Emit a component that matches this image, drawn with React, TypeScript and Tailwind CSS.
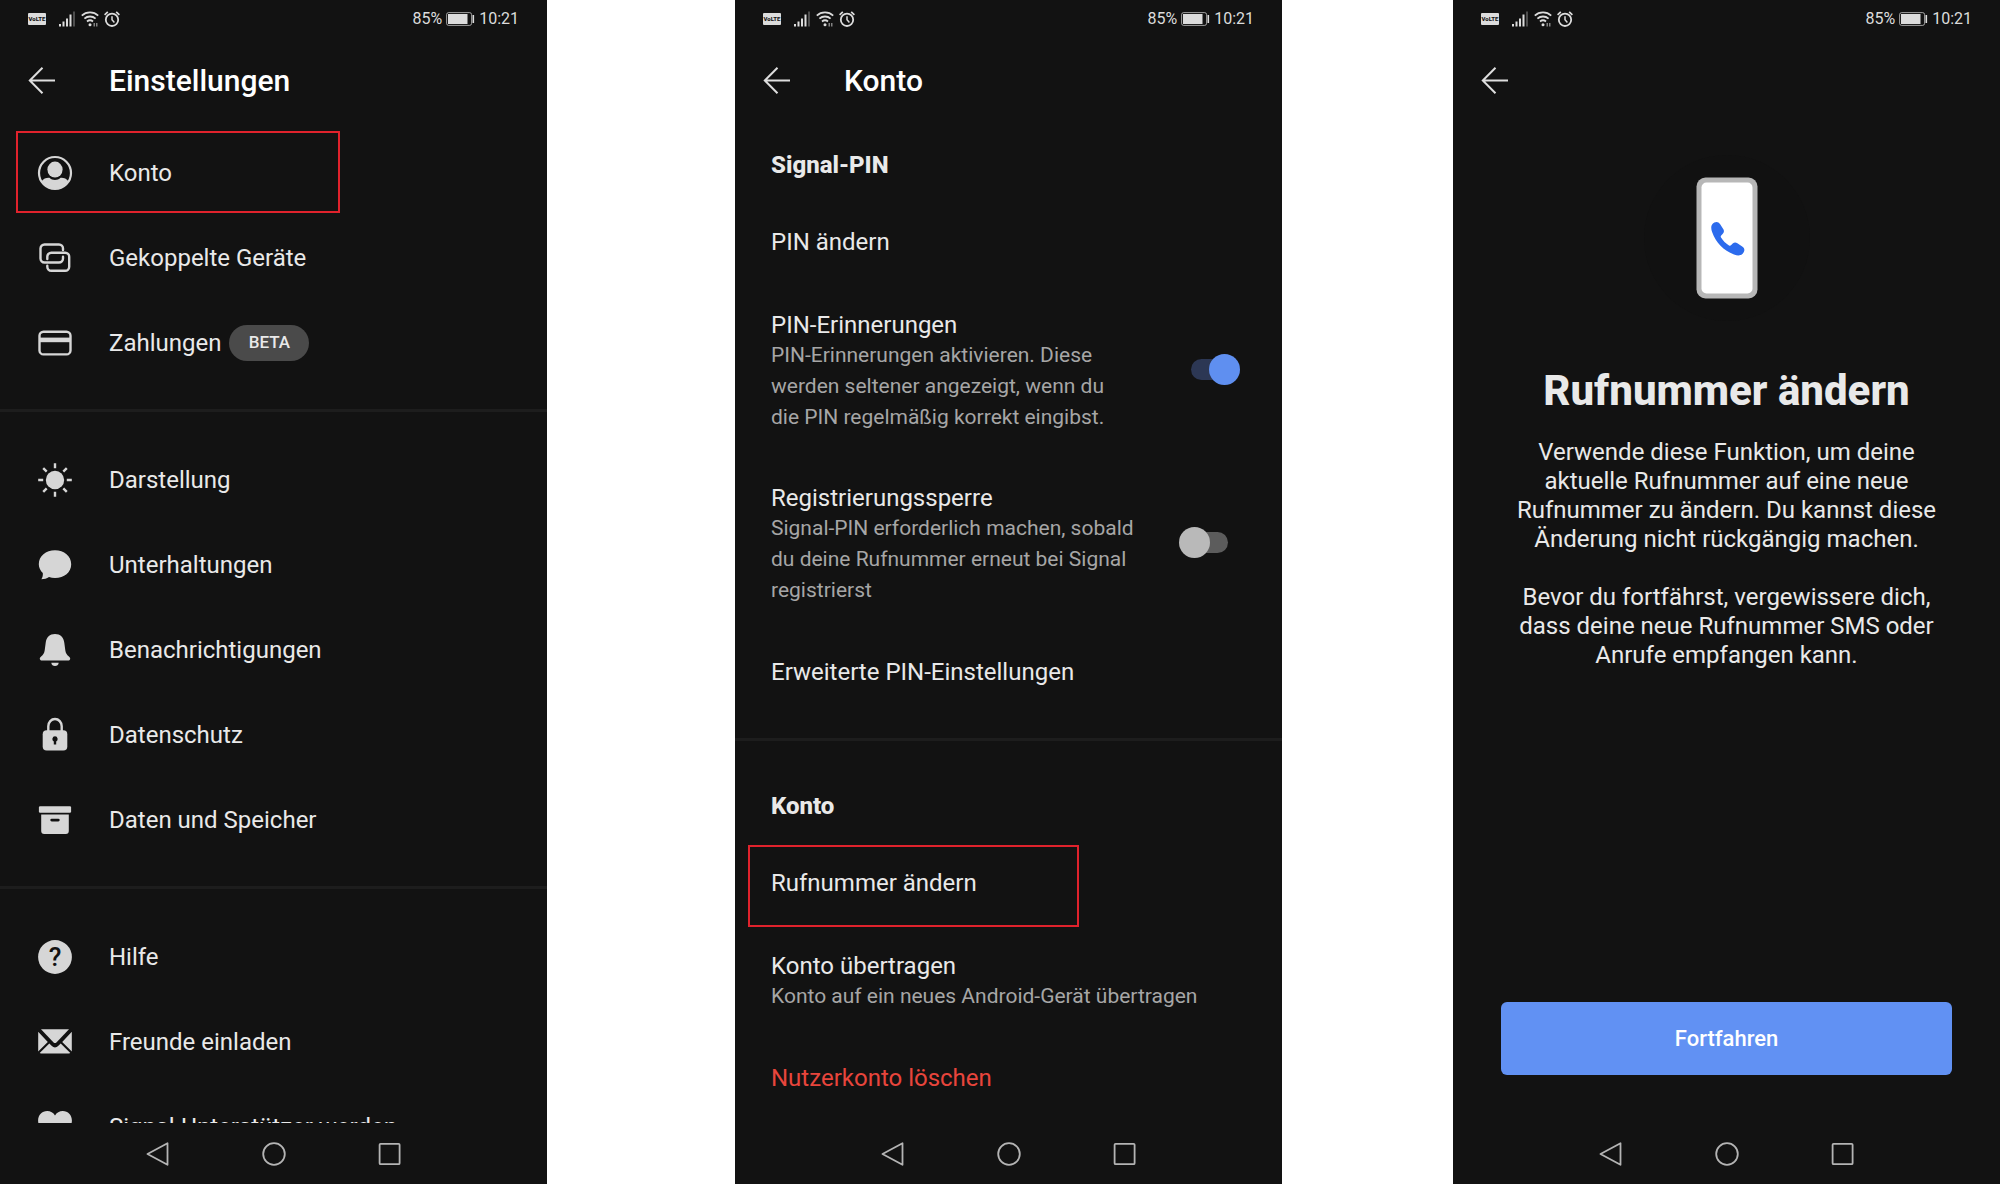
import { useState } from "react";
import type { ReactNode } from "react";

function Icon({ children }: { children: ReactNode }) {
  return (
    <svg viewBox="0 0 36 36" className="h-9 w-9 shrink-0 text-[#d6d6d6]" fill="currentColor" aria-hidden="true">
      {children}
    </svg>
  );
}

const icons = {
  account: (
    <Icon>
      <circle cx="18" cy="18" r="16" fill="none" stroke="currentColor" strokeWidth="2.2" />
      <ellipse cx="18" cy="14.6" rx="7.6" ry="8" />
      <path d="M4.5 26.5C6.500 23.600 9.300 22.600 12.400 22.800c3 2.900 8.200 2.900 11.200 0 3.100-.2 5.900.8 7.900 3.700A16 16 0 0 1 4.500 26.500z" />
    </Icon>
  ),
  devices: (
    <Icon>
      <g fill="none" stroke="currentColor" strokeWidth="2.400" strokeLinecap="round">
        <path d="M26 10V8.500a4 4 0 0 0-4-4H7.500a4 4 0 0 0-4 4v10a4 4 0 0 0 4 4H22a4 4 0 0 0 4-4v-1.700" />
        <path d="M10.300 19v-2.200a4 4 0 0 1 4-4h13.900a4 4 0 0 1 4 4v10a4 4 0 0 1-4 4H14.300a4 4 0 0 1-4-4v-1" />
      </g>
    </Icon>
  ),
  card: (
    <Icon>
      <rect x="2.500" y="6.700" width="31" height="22.700" rx="4" fill="none" stroke="currentColor" strokeWidth="2.400" />
      <rect x="2.500" y="12.600" width="31" height="4.600" />
    </Icon>
  ),
  sun: (
    <Icon>
      <circle cx="18" cy="18" r="9.200" />
      <path
        d="M18 1.200v5M18 29.800v5M1.200 18h5M29.800 18h5M6.200 6.200l3.500 3.500M26.300 26.300l3.500 3.500M6.200 29.800l3.500-3.500M26.300 9.700l3.500-3.500"
        fill="none"
        stroke="currentColor"
        strokeWidth="2.400"
      />
    </Icon>
  ),
  chat: (
    <Icon>
      <path d="M18 3.200c9.200 0 16.200 5.800 16.200 14S27.200 31 18 31c-2.200 0-4.200-.3-6-.9-2.200 1.400-4.700 2.200-7.600 2.200 1.200-2 1.700-4 1.400-6.200C3.400 23.700 1.800 20.700 1.800 17.200c0-8.200 7-14 16.200-14z" />
    </Icon>
  ),
  bell: (
    <Icon>
      <path d="M18 2c5.300 0 8.600 3.400 9.300 8.700l1 7.600c.4 3 1.500 4.500 3.600 6.200 1.200 1 1.500 1.800 1.200 2.800-.3.900-1 1.200-2.100 1.200H5c-1.100 0-1.800-.3-2.100-1.200-.3-1 0-1.800 1.200-2.800 2.100-1.700 3.200-3.200 3.600-6.200l1-7.600C9.400 5.400 12.700 2 18 2z" />
      <path d="M14.300 30.700h7.400c-.3 2.100-1.600 3.300-3.700 3.300s-3.400-1.200-3.700-3.300z" />
    </Icon>
  ),
  lock: (
    <Icon>
      <path d="M11.300 15V9.200a6.700 7.200 0 0 1 13.400 0V15" fill="none" stroke="currentColor" strokeWidth="2.400" />
      <rect x="5.700" y="13.300" width="24.600" height="20.200" rx="4" />
      <path d="M18 19.300a2.700 2.700 0 0 1 1.200 5.100v3h-2.400v-3a2.700 2.700 0 0 1 1.200-5.100z" fill="#121212" />
    </Icon>
  ),
  archive: (
    <Icon>
      <rect x="1.900" y="4.200" width="32.200" height="6.500" rx="1.200" />
      <path
        fillRule="evenodd"
        d="M4.200 12.600h27.600v16.400a3 3 0 0 1-3 3H7.200a3 3 0 0 1-3-3zM14.700 16.700a1.400 1.400 0 0 0 0 2.800h6.600a1.400 1.400 0 0 0 0-2.800z"
      />
    </Icon>
  ),
  help: (
    <Icon>
      <circle cx="18" cy="18" r="16.900" />
      <text x="18" y="27" textAnchor="middle" fontSize="26" fontWeight="500" fill="#121212">
        ?
      </text>
    </Icon>
  ),
  mail: (
    <Icon>
      <path d="M4 5.200h28L19.400 18.400a2 2 0 0 1-2.800 0z" />
      <path d="M1.200 7.700l9.600 10.200-9.600 9.600zM34.800 7.700l-9.600 10.200 9.600 9.600z" />
      <path d="M12.300 19.400l2.600 2.700a4.300 4.300 0 0 0 6.200 0l2.600-2.700L33.300 29a3 3 0 0 1-1.300.5H4a3 3 0 0 1-1.300-.5z" />
    </Icon>
  ),
  heart: (
    <Icon>
      <path d="M18 6.600C19.600 3.500 22.500 2 25.800 2c5.200 0 9.100 4 9.100 9.500 0 9.200-9.900 16.200-16.900 21.700C11 27.700 1.100 20.700 1.100 11.500 1.100 6 5 2 10.200 2c3.300 0 6.200 1.500 7.800 4.600z" />
    </Icon>
  ),
};

function StatusBar() {
  return (
    <div className="flex h-[38px] shrink-0 items-center pr-[28px] pl-[28px] text-[#dcdcdc]">
      <span className="flex h-3 w-[18px] items-center justify-center rounded-[1px] bg-[#dcdcdc] text-[6px] leading-none font-extrabold text-[#121212]">
        VoLTE
      </span>
      <svg viewBox="0 0 17 16" className="ml-[13px] h-4 w-[17px]" fill="currentColor" aria-hidden="true">
        <path d="M0 13h2v2.500H0zM3.500 10.500h2v5h-2zM7 7.500h2v8H7zM10.500 3.500h2v12h-2z" />
        <path d="M14 .5h2v15h-2z" opacity=".3" />
      </svg>
      <svg viewBox="0 0 18 16" className="ml-[5px] h-4 w-[18px]" fill="none" stroke="currentColor" aria-hidden="true">
        <path d="M.8 4.600a12.200 12.200 0 0 1 16.400 0M3.400 7.600a8.500 8.500 0 0 1 11.200 0M6 10.500a4.700 4.700 0 0 1 6 0" strokeWidth="1.800" />
        <circle cx="9" cy="13.700" r="1.500" fill="currentColor" stroke="none" />
        <path d="M13.200 12v3.500M15.800 12v3.500" strokeWidth="1.200" opacity=".7" />
      </svg>
      <svg viewBox="0 0 16 16" className="ml-[5px] h-4 w-4" fill="none" stroke="currentColor" aria-hidden="true">
        <circle cx="8" cy="8.800" r="6.200" strokeWidth="1.800" />
        <path d="M8 5.200v3.600l2.400 2.600" strokeWidth="1.500" />
        <path d="M.6 3.800 3.800.8M15.400 3.800 12.200.8" strokeWidth="1.700" />
      </svg>
      <span className="ml-auto text-base leading-none">85%</span>
      <svg viewBox="0 0 29 14" className="ml-1 h-3.5 w-[29px]" aria-hidden="true">
        <rect x=".6" y=".6" width="25" height="12.800" rx="2" fill="none" stroke="currentColor" opacity=".7" />
        <rect x="2" y="2" width="19.500" height="10" fill="currentColor" />
        <path d="M27.300 3v8" stroke="currentColor" strokeWidth="1.600" />
      </svg>
      <span className="ml-1 text-base leading-none">10:21</span>
    </div>
  );
}

function Header({ title }: { title?: string }) {
  return (
    <header className="flex h-[85px] shrink-0 items-center pl-[28px]">
      <button type="button" aria-label="Zurück" className="w-[81px]">
        <svg viewBox="0 0 28 28" className="h-7 w-7" fill="none" stroke="#dedede" strokeWidth="2" aria-hidden="true">
          <path d="M27 13.500H1.600M14.500.7 1.800 13.500l12.700 12.800" />
        </svg>
      </button>
      {title && <h1 className="text-[30px] leading-9 font-medium text-white">{title}</h1>}
    </header>
  );
}

function NavBar() {
  return (
    <nav className="mt-auto flex h-[61px] shrink-0 items-center justify-center gap-[92px] text-[#b4b4b4]">
      <button type="button" aria-label="Zurück">
        <svg viewBox="0 0 24 24" className="h-6 w-6" fill="none" stroke="currentColor" strokeWidth="1.800" strokeLinejoin="round">
          <path d="M21.500 1.200v21.600L1.500 12z" />
        </svg>
      </button>
      <button type="button" aria-label="Startbildschirm">
        <svg viewBox="0 0 24 24" className="h-6 w-6" fill="none" stroke="currentColor" strokeWidth="1.800">
          <circle cx="12" cy="12" r="10.800" />
        </svg>
      </button>
      <button type="button" aria-label="Letzte Apps">
        <svg viewBox="0 0 24 24" className="h-6 w-6" fill="none" stroke="currentColor" strokeWidth="1.800">
          <rect x="1.600" y="1.800" width="20" height="20.400" rx="1" />
        </svg>
      </button>
    </nav>
  );
}

function Screen({ title, children }: { title?: string; children: ReactNode }) {
  return (
    <section className="flex h-screen min-w-0 flex-col overflow-hidden bg-[#121212] text-[#e9e9e9]">
      <StatusBar />
      <Header title={title} />
      {children}
      <NavBar />
    </section>
  );
}

function Divider() {
  return <hr className="mt-6 mb-[25px] border-t-[3px] border-[#1d1d1d]" />;
}

function MenuItem({ icon, label, badge, marked }: { icon: ReactNode; label: string; badge?: string; marked?: boolean }) {
  return (
    <a href="#" className="relative flex h-[85px] items-center gap-9 pl-[37px]">
      {marked && <span className="absolute top-px left-4 h-[82px] w-[324px] border-2 border-[#e0222c]" />}
      {icon}
      <span className="flex items-center gap-2 text-2xl">
        {label}
        {badge && (
          <span className="flex h-9 w-20 items-center justify-center rounded-full bg-[#4a4a4a] text-[17px] font-medium">
            {badge}
          </span>
        )}
      </span>
    </a>
  );
}

function SectionTitle({ children }: { children: ReactNode }) {
  return <h2 className="px-9 pt-[25px] pb-5 text-2xl leading-[30px] font-extrabold">{children}</h2>;
}

function TextItem({ label, danger, marked }: { label: string; danger?: boolean; marked?: boolean }) {
  return (
    <a href="#" className={`relative block px-9 py-[27px] text-2xl leading-[30px] ${danger ? "text-[#e8453c]" : ""}`}>
      {marked && <span className="absolute top-1 left-[13px] h-[82px] w-[331px] border-2 border-[#e0222c]" />}
      {label}
    </a>
  );
}

function ToggleItem({ id, label, hint, initial }: { id: string; label: string; hint: string; initial: boolean }) {
  const [on, setOn] = useState(initial);
  return (
    <div className="flex items-center pt-[26px] pr-[42px] pb-6 pl-9">
      <label htmlFor={id} className="min-w-0 flex-1">
        <span className="block text-2xl leading-[30px]">{label}</span>
        <span className="block text-[21px] leading-[31px] text-[#a6a6a6]">{hint}</span>
      </label>
      <input
        id={id}
        type="checkbox"
        role="switch"
        checked={on}
        onChange={(e) => setOn(e.target.checked)}
        className="relative mb-1 ml-8 h-[31px] w-[61px] shrink-0 appearance-none before:absolute before:top-[5px] before:left-3 before:h-[21px] before:w-[37px] before:rounded-full before:bg-[#5c5c5c] after:absolute after:top-0 after:left-0 after:h-[31px] after:w-[31px] after:rounded-full after:bg-[#b9b9b9] checked:before:bg-[#2c3754] checked:after:left-[30px] checked:after:bg-[#5f8ff0]"
      />
    </div>
  );
}

export default function App() {
  return (
    <main className="grid min-h-screen grid-cols-[547fr_188fr_547fr_171fr_547fr] bg-white font-[Roboto,sans-serif]">
      <Screen title="Einstellungen">
        <div className="min-h-0 flex-1 overflow-hidden pt-[7px]">
          <MenuItem icon={icons.account} label="Konto" marked />
          <MenuItem icon={icons.devices} label="Gekoppelte Geräte" />
          <MenuItem icon={icons.card} label="Zahlungen" badge="BETA" />
          <Divider />
          <MenuItem icon={icons.sun} label="Darstellung" />
          <MenuItem icon={icons.chat} label="Unterhaltungen" />
          <MenuItem icon={icons.bell} label="Benachrichtigungen" />
          <MenuItem icon={icons.lock} label="Datenschutz" />
          <MenuItem icon={icons.archive} label="Daten und Speicher" />
          <Divider />
          <MenuItem icon={icons.help} label="Hilfe" />
          <MenuItem icon={icons.mail} label="Freunde einladen" />
          <MenuItem icon={icons.heart} label="Signal-Unterstützer werden" />
        </div>
      </Screen>

      <div />

      <Screen title="Konto">
        <div className="min-h-0 flex-1 overflow-hidden pt-0.5">
          <SectionTitle>Signal-PIN</SectionTitle>
          <TextItem label="PIN ändern" />
          <ToggleItem
            id="pin-reminders"
            label="PIN-Erinnerungen"
            hint={"PIN-Erinnerungen aktivieren. Diese werden seltener angezeigt, wenn du die\u00a0PIN regelmäßig korrekt eingibst."}
            initial={true}
          />
          <ToggleItem
            id="registration-lock"
            label="Registrierungssperre"
            hint="Signal-PIN erforderlich machen, sobald du deine Rufnummer erneut bei Signal registrierst"
            initial={false}
          />
          <TextItem label="Erweiterte PIN-Einstellungen" />
          <Divider />
          <SectionTitle>Konto</SectionTitle>
          <TextItem label="Rufnummer ändern" marked />
          <a href="#" className="block px-9 pt-[26px] pb-6">
            <span className="block text-2xl leading-[30px]">Konto übertragen</span>
            <span className="block text-[21px] leading-[31px] text-[#a6a6a6]">
              Konto auf ein neues Android-Gerät übertragen
            </span>
          </a>
          <TextItem label="Nutzerkonto löschen" danger />
        </div>
      </Screen>

      <div />

      <Screen>
        <div className="flex min-h-0 flex-1 flex-col items-center px-12 pt-8 text-center">
          <svg viewBox="0 0 166 166" className="h-[166px] w-[166px] shrink-0" aria-hidden="true">
            <circle cx="83" cy="83" r="83" fill="#111111" />
            <rect x="52.500" y="22.500" width="61" height="121" rx="9" fill="#b7b7b7" />
            <rect x="57.500" y="27.500" width="51" height="111" rx="5" fill="#fff" />
            <path
              d="M70.300 67.600c2.300-1.300 4.300-.7 5.700 1.500l3.200 4.900c1.100 1.700 1 3.200-.4 4.700l-1.600 1.700c-.6.700-.6 1.200-.2 2 2 3.300 4.700 6 8 8 .8.400 1.400.400 2-.2l1.700-1.600c1.500-1.400 3-1.500 4.700-.4l4.800 3.200c2.200 1.500 2.800 3.500 1.500 5.800-2 3.500-5.200 3.900-9.700 2.300C79.600 95.700 71.800 87.600 68.200 77.300c-1.600-4.500-1.400-7.700 2.100-9.700z"
              fill="#2c6bed"
            />
          </svg>
          <h1 className="mt-[45px] text-[42px] leading-[50px] font-extrabold">Rufnummer ändern</h1>
          <p className="mt-[22px] text-2xl leading-[29px]">
            Verwende diese Funktion, um deine aktuelle Rufnummer auf eine neue Rufnummer zu ändern. Du kannst diese
            Änderung nicht rückgängig machen.
          </p>
          <p className="mt-[29px] text-2xl leading-[29px]">
            Bevor du fortfährst, vergewissere dich, dass deine neue Rufnummer SMS oder Anrufe empfangen kann.
          </p>
          <button
            type="button"
            className="mt-auto mb-12 h-[73px] w-full rounded-md bg-[#6191f3] text-[22px] font-medium text-white"
          >
            Fortfahren
          </button>
        </div>
      </Screen>
    </main>
  );
}
